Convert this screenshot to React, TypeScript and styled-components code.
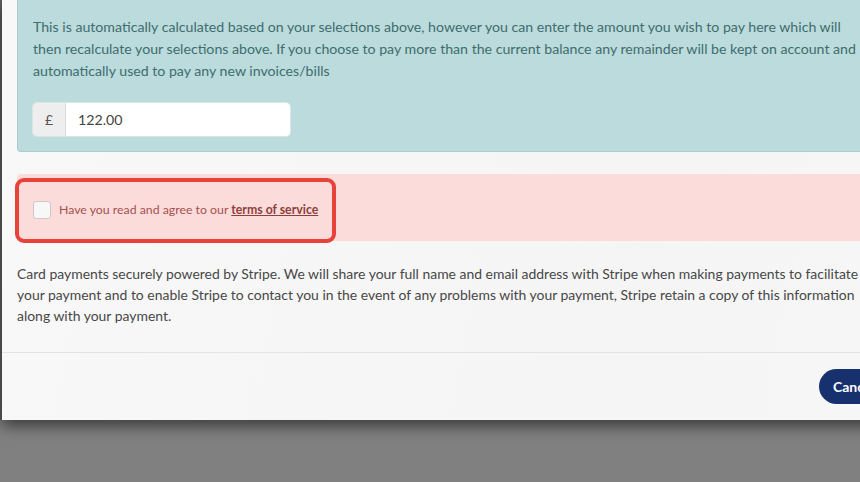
import React from "react";
import styled, { createGlobalStyle } from "styled-components";

const Global = createGlobalStyle`
  html, body { margin: 0; padding: 0; }
  body {
    background: #808080;
    overflow: hidden;
    font-family: Lato, "Noto Sans", Arial, sans-serif;
  }
`;

const Page = styled.div`
  padding-bottom: 60px;
`;

const Modal = styled.div`
  width: 1060px;
  margin-left: 2px;
  background: linear-gradient(100deg, #f8f8f8 0%, #f5f5f5 60%, #f7f7f7 100%);
  box-shadow: 0 6px 14px rgba(0, 0, 0, 0.55), -2px 0 0 #5f5f5f;
`;

const Body = styled.div`
  padding: 0 15px 0 15px;
`;

const InfoPanel = styled.div`
  background: #bbdbdc;
  border: 1px solid #abcdce;
  border-top: none;
  border-radius: 0 0 4px 4px;
  padding: 16px 15px 15px 15px;
`;

const InfoText = styled.p`
  margin: 0;
  color: #3f6d6e;
  font-size: 14.15px;
  line-height: 22px;
  white-space: nowrap;
`;

const InputGroup = styled.div`
  display: flex;
  width: 257px;
  height: 33px;
  margin-top: 21px;
  border-radius: 4px;
  overflow: hidden;
  box-shadow: 0 0 0 1px #d9e6e6;
`;

const Addon = styled.span`
  display: flex;
  align-items: center;
  justify-content: center;
  width: 32px;
  background: #eeeeee;
  border-right: 1px solid #dddddd;
  color: #555;
  font-size: 14px;
`;

const AmountInput = styled.input`
  flex: 1;
  border: none;
  outline: none;
  background: #fff;
  padding: 0 12px;
  font-family: inherit;
  font-size: 14.2px;
  color: #444;
`;

const TermsPanel = styled.div`
  position: relative;
  margin-top: 22px;
  background: #fcdcdb;
  border-radius: 4px;
  padding: 25px 16px 22px 16px;
`;

const TermsRow = styled.label`
  display: flex;
  align-items: center;
  gap: 8px;
  color: #a4514e;
  font-size: 12.3px;
  height: 19px;
  padding-top: 1px;
`;

const Box = styled.span`
  width: 18px;
  height: 18px;
  box-sizing: border-box;
  background: #f7f7f7;
  border: 1px solid #d4c6c6;
  border-radius: 3px;
`;

const TermsLink = styled.a`
  color: #8e3f3d;
  font-weight: 700;
  text-decoration: underline;
`;

const Highlight = styled.div`
  position: absolute;
  left: -2px;
  top: 4px;
  width: 321px;
  height: 65px;
  box-sizing: border-box;
  border: 4px solid #e8433a;
  border-radius: 9px;
  pointer-events: none;
`;

const StripeText = styled.p`
  margin: 22px 0 0 0;
  color: #474747;
  font-size: 13.95px;
  line-height: 21px;
  white-space: nowrap;
`;

const Footer = styled.div`
  margin-top: 26px;
  border-top: 1px solid #e3e3e3;
  padding: 16px 15px;
  display: flex;
  gap: 6px;
  padding-left: 817px;
`;

const Button = styled.button<{ $primary?: boolean }>`
  height: 35px;
  border: none;
  border-radius: 18px;
  padding: 0 14px;
  background: ${(p) => (p.$primary ? "#1d8a4e" : "#17306e")};
  color: #fff;
  font-family: inherit;
  font-weight: 700;
  font-size: 14px;
`;

export default function App() {
  return (
    <>
      <Global />
      <Page>
        <Modal>
          <Body>
            <InfoPanel>
              <InfoText>
                This is automatically calculated based on your selections above, however you can enter the amount you wish to pay here which will
                <br />
                then recalculate your selections above. If you choose to pay more than the current balance any remainder will be kept on account and
                <br />
                automatically used to pay any new invoices/bills
              </InfoText>
              <InputGroup>
                <Addon>£</Addon>
                <AmountInput defaultValue="122.00" />
              </InputGroup>
            </InfoPanel>
            <TermsPanel>
              <TermsRow>
                <Box />
                <span>
                  Have you read and agree to our <TermsLink>terms of service</TermsLink>
                </span>
              </TermsRow>
              <Highlight />
            </TermsPanel>
            <StripeText>
              Card payments securely powered by Stripe. We will share your full name and email address with Stripe when making payments to facilitate
              <br />
              your payment and to enable Stripe to contact you in the event of any problems with your payment, Stripe retain a copy of this information
              <br />
              along with your payment.
            </StripeText>
          </Body>
          <Footer>
            <Button>Cancel</Button>
            <Button $primary>Make Payment</Button>
          </Footer>
        </Modal>
      </Page>
    </>
  );
}
